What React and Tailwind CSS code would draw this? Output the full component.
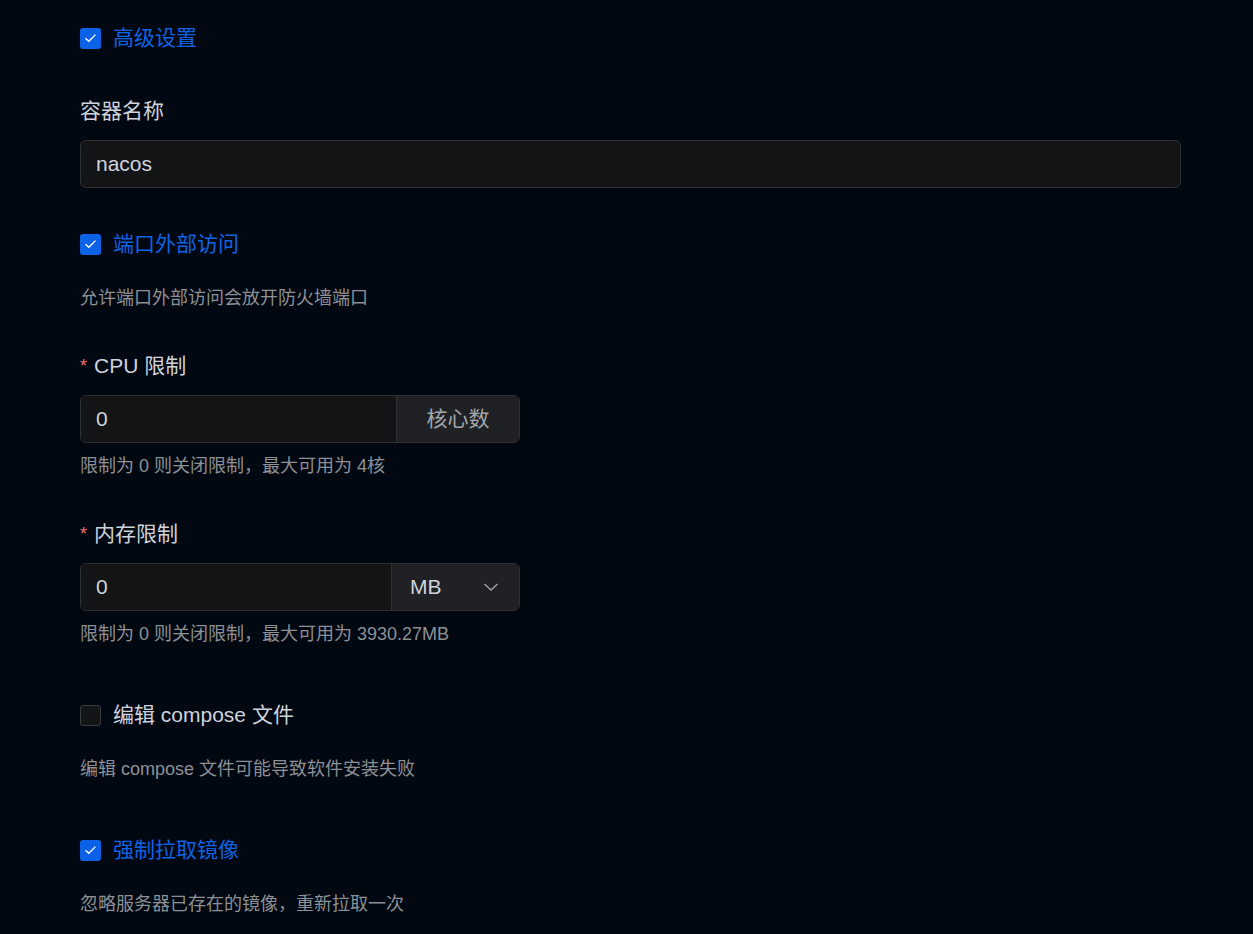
const font = { fontFamily: '"Liberation Sans", "Noto Sans CJK SC", sans-serif' }

function Check({ checked, label }) {
  return (
    <div className="flex h-[30px] items-center">
      {checked ? (
        <span className="flex h-[21px] w-[21px] items-center justify-center rounded-[3px] bg-[#0b62e6]">
          <svg width="13" height="10" viewBox="0 0 13 10" fill="none">
            <path d="M1.5 5.2 L4.8 8.3 L11.5 1.6" stroke="#ffffff" strokeWidth="1.3" />
          </svg>
        </span>
      ) : (
        <span className="h-[21px] w-[21px] rounded-[3px] border border-[#3a3c40] bg-[#141517]"></span>
      )}
      <span className={`ml-[12px] text-[21px] ${checked ? 'text-[#0f63e3]' : 'text-[#cfd3dc]'}`}>
        {label}
      </span>
    </div>
  )
}

function Hint({ children, className = '' }) {
  return <div className={`h-[24px] text-[18px] leading-[24px] text-[#8d9095] ${className}`}>{children}</div>
}

function Label({ required, children, className = '' }) {
  return (
    <div className={`flex h-[30px] items-center text-[21px] text-[#cfd3dc] ${className}`}>
      {required && <span className="mr-[7px] text-[18px] text-[#f56c6c]">*</span>}
      {children}
    </div>
  )
}

export default function App() {
  return (
    <div className="min-h-[934px] bg-[#010812] pl-[80px] pr-[72px] pt-[23px]" style={font}>
      <Check checked label="高级设置" />

      <Label className="mt-[43px]">容器名称</Label>
      <div className="mt-[14px] flex h-[48px] items-center rounded-[6px] border border-[#2e3034] bg-[#131416] px-[15px] text-[21px] text-[#cfd3dc]">
        nacos
      </div>

      <div className="mt-[41px]">
        <Check checked label="端口外部访问" />
      </div>
      <Hint className="mt-[27px]">允许端口外部访问会放开防火墙端口</Hint>

      <Label required className="mt-[41px]">CPU 限制</Label>
      <div className="mt-[14px] flex h-[48px] w-[440px] overflow-hidden rounded-[6px] border border-[#2e3034]">
        <div className="flex flex-1 items-center bg-[#131416] px-[15px] text-[21px] text-[#cfd3dc]">0</div>
        <div className="flex w-[123px] items-center justify-center border-l border-[#2e3034] bg-[#1f2124] text-[21px] text-[#a3a6ad]">
          核心数
        </div>
      </div>
      <Hint className="mt-[11px]">限制为 0 则关闭限制，最大可用为 4核</Hint>

      <Label required className="mt-[41px]">内存限制</Label>
      <div className="mt-[14px] flex h-[48px] w-[440px] overflow-hidden rounded-[6px] border border-[#2e3034]">
        <div className="flex flex-1 items-center bg-[#131416] px-[15px] text-[21px] text-[#cfd3dc]">0</div>
        <div className="flex w-[128px] items-center justify-between border-l border-[#2e3034] bg-[#1f2124] pl-[18px] pr-[20px] text-[21px] text-[#cfd3dc]">
          <span>MB</span>
          <svg width="16" height="10" viewBox="0 0 16 10" fill="none">
            <path d="M1.5 2 L8 8 L14.5 2" stroke="#a3a6ad" strokeWidth="1.3" />
          </svg>
        </div>
      </div>
      <Hint className="mt-[11px]">限制为 0 则关闭限制，最大可用为 3930.27MB</Hint>

      <div className="mt-[54px]">
        <Check label="编辑 compose 文件" />
      </div>
      <Hint className="mt-[27px]">编辑 compose 文件可能导致软件安装失败</Hint>

      <div className="mt-[54px]">
        <Check checked label="强制拉取镜像" />
      </div>
      <Hint className="mt-[27px]">忽略服务器已存在的镜像，重新拉取一次</Hint>
    </div>
  )
}
